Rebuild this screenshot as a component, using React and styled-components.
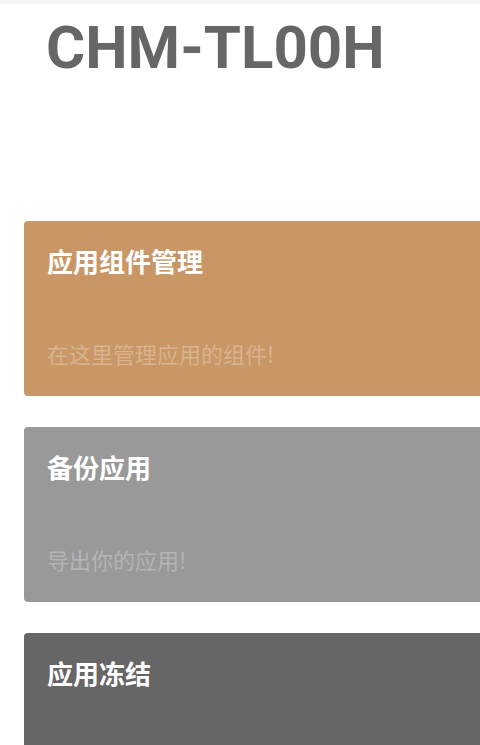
import React from "react";
import styled, { createGlobalStyle } from "styled-components";

const Global = createGlobalStyle`
  html, body { margin: 0; padding: 0; background: #fff; overflow: hidden; }
  body { font-family: Roboto, "Noto Sans CJK SC", sans-serif; }
`;

const Page = styled.div`
  width: 480px;
  height: 745px;
  overflow: hidden;
  display: flex;
  flex-direction: column;
`;

const TopStrip = styled.div`
  height: 4px;
  background: #f6f6f6;
  flex: none;
`;

const Heading = styled.h1`
  margin: 0;
  padding: 9px 0 0 46px;
  font-family: Roboto, sans-serif;
  font-weight: 700;
  font-size: 60px;
  line-height: 70px;
  color: #666666;
  letter-spacing: 0;
`;

const CardList = styled.div`
  display: flex;
  flex-direction: column;
  gap: 31px;
  padding: 138px 0 0 24px;
`;

const Card = styled.div`
  width: 500px;
  height: 175px;
  flex: none;
  box-sizing: border-box;
  border-radius: 4px;
  background: ${(p) => p.$bg};
  padding: 24px 23px;
  display: flex;
  flex-direction: column;
  justify-content: space-between;
  font-family: "Noto Sans CJK SC", sans-serif;
`;

const CardTitle = styled.div`
  font-size: 26px;
  font-weight: 700;
  line-height: 32px;
  color: #fff;
`;

const CardDesc = styled.div`
  font-size: 22px;
  line-height: 30px;
  color: rgba(255, 255, 255, 0.28);
  padding-bottom: 4px;
`;

const cards = [
  { title: "应用组件管理", desc: "在这里管理应用的组件!", bg: "#c99766" },
  { title: "备份应用", desc: "导出你的应用!", bg: "#999999" },
  { title: "应用冻结", desc: "冻结你的应用!", bg: "#666666" },
];

export default function App() {
  return (
    <Page>
      <Global />
      <TopStrip />
      <Heading>CHM-TL00H</Heading>
      <CardList>
        {cards.map((c) => (
          <Card key={c.title} $bg={c.bg}>
            <CardTitle>{c.title}</CardTitle>
            <CardDesc>{c.desc}</CardDesc>
          </Card>
        ))}
      </CardList>
    </Page>
  );
}
